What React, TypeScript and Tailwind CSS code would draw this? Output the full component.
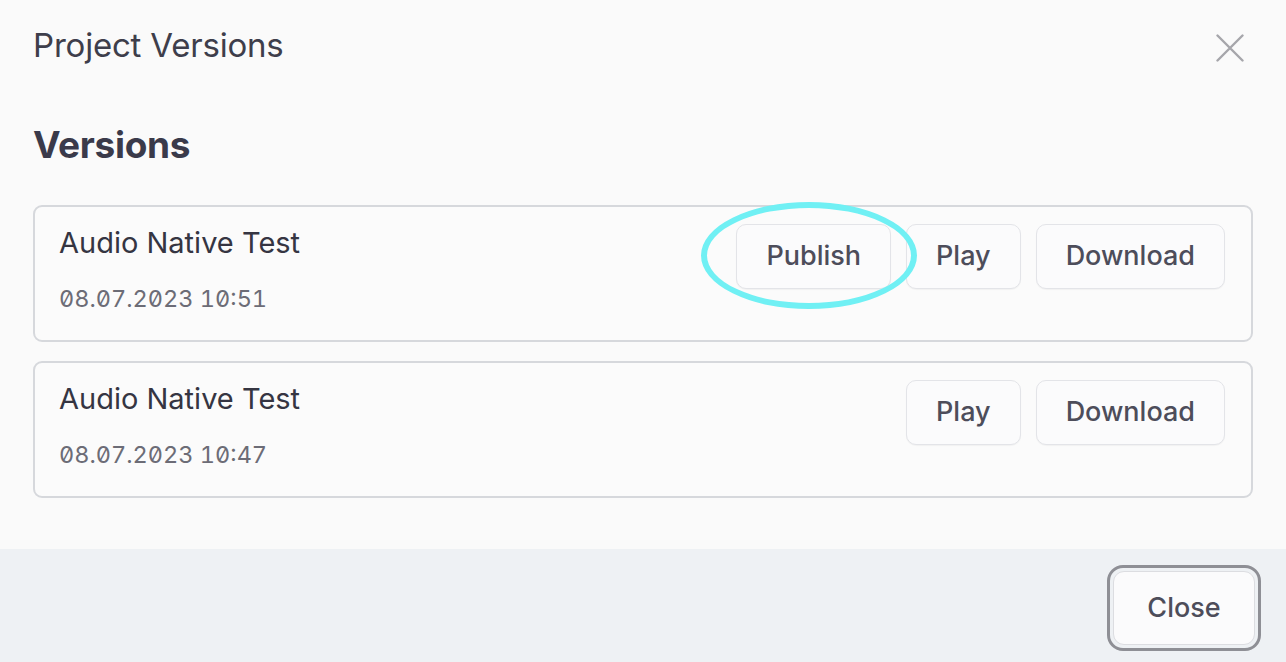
import React from 'react';

interface Version {
  name: string;
  date: string;
  published?: boolean;
}

const versions: Version[] = [
  { name: 'Audio Native Test', date: '08.07.2023 10:51', published: true },
  { name: 'Audio Native Test', date: '08.07.2023 10:47' },
];

function ActionButton({ label }: { label: string }) {
  return (
    <button className="h-[65px] px-[29px] rounded-[10px] border border-[#e3e4e8] bg-[#fbfbfc] text-[27px] font-medium text-[#4d4d5a] shadow-[0_1px_1px_rgba(0,0,0,0.04)]">
      {label}
    </button>
  );
}

export default function App() {
  return (
    <div
      className="w-full h-[662px] flex flex-col bg-[#fafafa] overflow-hidden"
      style={{ fontFamily: 'Inter, "Noto Sans", sans-serif' }}
    >
      <div className="flex-1 px-[33px]">
        {/* Header */}
        <div className="flex items-start justify-between pt-[25px]">
          <h1 className="text-[33px] leading-[40px] text-[#3e3e4b] tracking-[-0.2px]">Project Versions</h1>
          <button className="mt-[9px] mr-[9px] text-[#a6a6ab]">
            <svg width="28" height="28" viewBox="0 0 28 28" fill="none" stroke="currentColor" strokeWidth="2.4" strokeLinecap="round">
              <path d="M1.5 1.5 L26.5 26.5 M26.5 1.5 L1.5 26.5" />
            </svg>
          </button>
        </div>

        <h2 className="mt-[58px] text-[37px] leading-[44px] font-bold text-[#3a3a4a] tracking-[-0.3px]">Versions</h2>

        {/* Version list */}
        <div className="mt-[38px] flex flex-col gap-[19px]">
          {versions.map((v, i) => (
            <div
              key={i}
              className="h-[137px] rounded-[9px] border-2 border-[#d6d8dc] bg-[#fbfbfb] flex items-start justify-between pl-[24px] pr-[26px] pt-[16px]"
            >
              <div className="flex flex-col">
                <span className="text-[29px] leading-[40px] text-[#353542]">{v.name}</span>
                <span className="mt-[22px] text-[23.5px] leading-[28px] text-[#6c6c76] slashed-zero tabular-nums">{v.date}</span>
              </div>
              <div className="flex items-center gap-[15px] pt-[1px]">
                {v.published && (
                  <div className="relative">
                    <ActionButton label="Publish" />
                    <div className="absolute left-[-35px] top-[-22px] w-[216px] h-[107px] rounded-[50%] border-[6px] border-[#70f0f4] pointer-events-none" />
                  </div>
                )}
                <ActionButton label="Play" />
                <ActionButton label="Download" />
              </div>
            </div>
          ))}
        </div>
      </div>

      {/* Footer */}
      <div className="h-[113px] bg-[#eef1f4] flex items-center justify-end pr-[25px] pt-[5px]">
        <button className="h-[86px] w-[154px] rounded-[16px] border-[3px] border-[#8e8f95] p-[3px] bg-[#eef1f4]">
          <span className="w-full h-full flex items-center justify-center rounded-[11px] border border-[#dcdde1] bg-[#fbfbfc] text-[27px] font-medium text-[#4d4d5a]">
            Close
          </span>
        </button>
      </div>
    </div>
  );
}
